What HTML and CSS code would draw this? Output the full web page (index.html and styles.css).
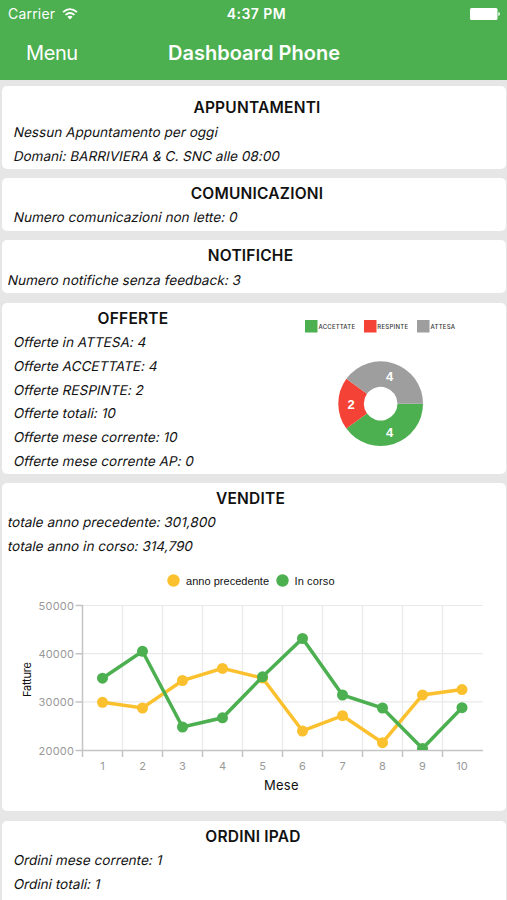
FILE: index.html
```html
<!DOCTYPE html>
<html lang="it">
<head>
<meta charset="utf-8">
<title>Dashboard Phone</title>
<link rel="stylesheet" href="styles.css">
</head>
<body>
<header class="header">
  <div class="status">
    <div class="carrier"><span>Carrier</span>
      <svg class="wifi" width="16" height="12" viewBox="0 0 16 12" fill="none" stroke="#fff" stroke-width="1.8"><path d="M1 4.2Q8-2 15 4.2M3.500 6.900Q8 3.100 12.500 6.900"/><path d="M5.400 8.800Q8 6.800 10.600 8.800L8 11.500Z" fill="#fff" stroke="none"/></svg>
    </div>
    <span class="time">4:37 PM</span>
    <svg class="battery" width="30" height="12" viewBox="0 0 30 12" fill="#fff"><rect width="27.500" height="12" rx="1.500"/><path d="M28.300 4Q30 4.500 30 6T28.300 8Z"/></svg>
  </div>
  <nav class="navbar"><span class="menu">Menu</span><h1>Dashboard Phone</h1></nav>
</header>
<main>
  <section class="card appointments">
    <h2>APPUNTAMENTI</h2>
    <p>Nessun Appuntamento per oggi</p>
    <p>Domani: BARRIVIERA &amp; C. SNC alle 08:00</p>
  </section>
  <section class="card">
    <h2>COMUNICAZIONI</h2>
    <p>Numero comunicazioni non lette: 0</p>
  </section>
  <section class="card flush">
    <h2>NOTIFICHE</h2>
    <p>Numero notifiche senza feedback: 3</p>
  </section>
  <section class="card offers">
    <div class="offer-list">
      <h2>OFFERTE</h2>
      <p>Offerte in ATTESA: 4</p>
      <p>Offerte ACCETTATE: 4</p>
      <p>Offerte RESPINTE: 2</p>
      <p>Offerte totali: 10</p>
      <p>Offerte mese corrente: 10</p>
      <p>Offerte mese corrente AP: 0</p>
    </div>
    <svg class="donut" width="240" height="168" viewBox="266 303 240 168">
      <g class="donut-legend">
        <rect x="305" y="320" width="12.500" height="12.500" fill="#4caf50"/><text x="318.500" y="329" textLength="36.500">ACCETTATE</text>
        <rect x="364" y="320" width="12.500" height="12.500" fill="#f44336"/><text x="377.300" y="329" textLength="30.700">RESPINTE</text>
        <rect x="417" y="320" width="12.500" height="12.500" fill="#9e9e9e"/><text x="430.500" y="329" textLength="24.500">ATTESA</text>
      </g>
      <g fill="none" stroke-width="25.500">
        <path d="M410.250 403.700A29.600 29.600 0 0 1 356.700 421.100" stroke="#4caf50"/>
        <path d="M356.700 421.100A29.600 29.600 0 0 1 356.700 386.300" stroke="#f44336"/>
        <path d="M356.700 386.300A29.600 29.600 0 0 1 410.250 403.700" stroke="#9e9e9e"/>
      </g>
      <g class="donut-value"><text x="389.700" y="381">4</text><text x="351" y="409">2</text><text x="389.700" y="437">4</text></g>
    </svg>
  </section>
  <section class="card sales flush">
    <h2>VENDITE</h2>
    <p>totale anno precedente: 301,800</p>
    <p>totale anno in corso: 314,790</p>
    <svg class="chart" width="504" height="240" viewBox="2 558 504 240">
      <defs><clipPath id="plot"><rect x="82" y="600" width="402" height="150"/></clipPath></defs>
      <circle cx="173.500" cy="580.500" r="6.200" fill="#fbc02d"/><circle cx="282.500" cy="580.500" r="6.200" fill="#4caf50"/>
      <g class="legend"><text x="186" y="585" textLength="83">anno precedente</text><text x="294.500" y="585" textLength="40">In corso</text></g>
      <path class="grid" d="M82 605.500H483M82 653.700H483M82 701.900H483M122.500 605V750M162.500 605V750M202.500 605V750M242.500 605V750M282.500 605V750M322.500 605V750M362.500 605V750M402.500 605V750M442.500 605V750"/>
      <path class="axis" d="M75.500 605.500H82.500V757M75.500 653.700H82M75.500 701.900H82M75.500 750.500H483M122.500 750V757M162.500 750V757M202.500 750V757M242.500 750V757M282.500 750V757M322.500 750V757M362.500 750V757M402.500 750V757M442.500 750V757"/>
      <g class="y-labels"><text x="74" y="610" textLength="35.500">50000</text><text x="74" y="658" textLength="35.500">40000</text><text x="74" y="706" textLength="35.500">30000</text><text x="74" y="754.500" textLength="35.500">20000</text></g>
      <g class="x-labels"><text x="102.500" y="770">1</text><text x="142.500" y="770">2</text><text x="182.500" y="770">3</text><text x="222.500" y="770">4</text><text x="262.500" y="770">5</text><text x="302.500" y="770">6</text><text x="342.500" y="770">7</text><text x="382.500" y="770">8</text><text x="422.500" y="770">9</text><text x="462" y="770">10</text></g>
      <text class="axis-title" x="264" y="790" textLength="34.500">Mese</text>
      <text class="axis-title small" transform="translate(31 697) rotate(-90)" textLength="35">Fatture</text>
      <g clip-path="url(#plot)" class="series">
        <g class="previous"><path d="M102.500 702.300L142.500 708L182.500 680.500L222.500 668.400L262.500 678L302.500 731L342.500 715.700L382.500 742.700L422.500 695L462 689.600"/>
          <circle cx="102.500" cy="702.300" r="5.500"/><circle cx="142.500" cy="708" r="5.500"/><circle cx="182.500" cy="680.500" r="5.500"/><circle cx="222.500" cy="668.400" r="5.500"/><circle cx="262.500" cy="678" r="5.500"/><circle cx="302.500" cy="731" r="5.500"/><circle cx="342.500" cy="715.700" r="5.500"/><circle cx="382.500" cy="742.700" r="5.500"/><circle cx="422.500" cy="695" r="5.500"/><circle cx="462" cy="689.600" r="5.500"/></g>
        <g class="current"><path d="M102.500 678.200L142.500 651.300L182.500 727L222.500 717.800L262.500 676.800L302.500 638.500L342.500 695L382.500 708L422.500 748.500L462 707.700"/>
          <circle cx="102.500" cy="678.200" r="5.500"/><circle cx="142.500" cy="651.300" r="5.500"/><circle cx="182.500" cy="727" r="5.500"/><circle cx="222.500" cy="717.800" r="5.500"/><circle cx="262.500" cy="676.800" r="5.500"/><circle cx="302.500" cy="638.500" r="5.500"/><circle cx="342.500" cy="695" r="5.500"/><circle cx="382.500" cy="708" r="5.500"/><circle cx="422.500" cy="748.500" r="5.500"/><circle cx="462" cy="707.700" r="5.500"/></g>
      </g>
    </svg>
  </section>
  <section class="card orders">
    <h2>ORDINI IPAD</h2>
    <p>Ordini mese corrente: 1</p>
    <p>Ordini totali: 1</p>
  </section>
</main>
</body>
</html>
```

FILE: styles.css
```css
* { box-sizing: border-box; }
body {
  margin: 0;
  height: 900px;
  overflow: hidden;
  background: #e6e6e6;
  color: #111;
  font-family: Inter, Roboto, sans-serif;
}
h1, h2, p { margin: 0; }
svg { display: block; }
.header { height: 79.5px; background: #4caf50; color: #fff; }
.status {
  display: grid;
  grid-template-columns: 1fr auto 1fr;
  align-items: center;
  height: 27px;
  padding: 0 7px 0 8px;
  font-size: 14px;
}
.carrier { display: flex; align-items: center; gap: 7px; letter-spacing: 0.2px; }
.time { padding-left: 5px; font-weight: 600; letter-spacing: 0.45px; }
.battery { justify-self: end; }
.navbar {
  display: grid;
  grid-template-columns: 1fr auto 1fr;
  align-items: center;
  height: 51px;
  font-size: 20px;
}
.menu { padding-left: 26px; letter-spacing: -0.4px; }
.navbar h1 { padding-left: 1px; font-size: 20px; font-weight: 600; }
main {
  display: flex;
  flex-direction: column;
  gap: 9.2px;
  padding: 6.5px 1px 0 2px;
}
.card {
  flex: none;
  min-height: 53.2px;
  padding-left: 11.5px;
  border-radius: 5px;
  background: #fff;
}
.card h2 {
  margin-left: -11.5px;
  padding-left: 6px;
  height: 27.5px;
  line-height: 31px;
  text-align: center;
  font-size: 15.5px;
  font-weight: 600;
  letter-spacing: 0.22px;
}
.card p {
  width: fit-content;
  height: 23.7px;
  line-height: 24px;
  font-size: 13.5px;
  white-space: nowrap;
  letter-spacing: 0.05px;
  transform: skewX(-12deg);
}
.flush { padding-left: 5.5px; }
.flush h2 { margin-left: -5.5px; padding: 0 7px 0 0; }
.appointments { height: 82.7px; padding-top: 6.5px; }
.appointments h2 { line-height: 30px; }
.offers { display: flex; height: 171px; }
.offer-list { width: 252.5px; }
.offers h2, .orders h2 { padding: 0 2px 0 0; }
.donut-legend text { font: 500 6px Inter, sans-serif; fill: #333; }
.donut-value text { font: bold 13px "Liberation Sans", sans-serif; fill: #fff; text-anchor: middle; }
.sales { height: 328.5px; }
.chart { margin-left: -5.5px; }
.legend text { font: 11px "Liberation Sans", sans-serif; fill: #111; }
.grid { fill: none; stroke: #e9e9e9; stroke-width: 1.2; }
.axis { fill: none; stroke: #c4c4c4; stroke-width: 1.5; }
.y-labels text { font: 11px Inter, sans-serif; fill: #999; text-anchor: end; }
.x-labels text { font: 11px Inter, sans-serif; fill: #999; text-anchor: middle; }
.axis-title { font: 13px Inter, sans-serif; fill: #111; }
.small { font-size: 11px; }
.series path { fill: none; stroke-width: 3.5; }
.previous { fill: #fbc02d; stroke: #fbc02d; }
.current { fill: #4caf50; stroke: #4caf50; }
.series circle { stroke: none; }
.orders { height: 110px; }
```
